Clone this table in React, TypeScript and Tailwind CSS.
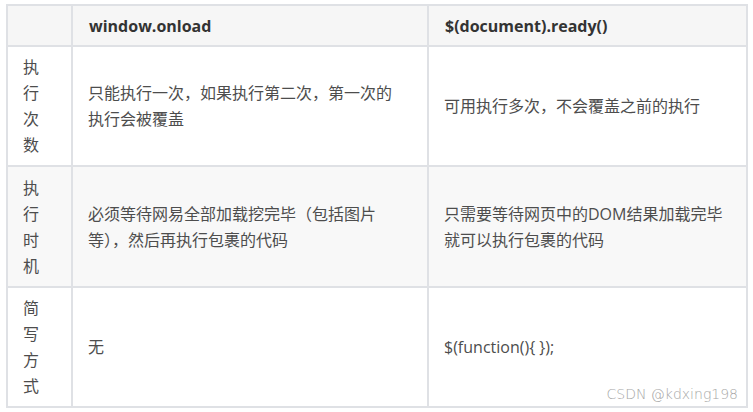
const font = '[font-family:"Open_Sans","Noto_Sans_CJK_SC",sans-serif]'

type Row = {
  label: string
  onload: string[]
  ready: string[]
  bg: string
  h: string
}

const rows: Row[] = [
  {
    label: '执行次数',
    onload: ['只能执行一次，如果执行第二次，第一次的', '执行会被覆盖'],
    ready: ['可用执行多次，不会覆盖之前的执行'],
    bg: 'bg-white',
    h: 'h-[120px]',
  },
  {
    label: '执行时机',
    onload: ['必须等待网易全部加载挖完毕（包括图片', '等），然后再执行包裹的代码'],
    ready: ['只需要等待网页中的DOM结果加载完毕', '就可以执行包裹的代码'],
    bg: 'bg-[#f8f8f8]',
    h: 'h-[121px]',
  },
  {
    label: '简写方式',
    onload: ['无'],
    ready: ['$(function(){ });'],
    bg: 'bg-white',
    h: 'h-[120px]',
  },
]

const Cell = ({ lines, bg, h }: { lines: string[]; bg: string; h: string }) => (
  <div className={`flex items-center border-r-2 border-b-2 border-[#dfe1e5] px-[15px] ${bg} ${h}`}>
    <p>
      {lines.map((l, i) => (
        <span key={i} className="block whitespace-nowrap">
          {l}
        </span>
      ))}
    </p>
  </div>
)

export default function App() {
  return (
    <div className={`min-h-[412px] w-[753px] bg-white pl-[6px] pt-[4px] text-[16px] leading-[26px] text-[#4d4d4d] ${font}`}>
      <div className="relative grid w-[742px] grid-cols-[65px_356px_319px] border-l-2 border-t-2 border-[#dfe1e5]">
        <div className="h-[41px] border-r-2 border-b-2 border-[#dfe1e5] bg-[#f6f6f6]" />
        <div className="flex h-[41px] items-center border-r-2 border-b-2 border-[#dfe1e5] bg-[#f6f6f6] px-4 font-bold text-[#333]">
          window.onload
        </div>
        <div className="flex h-[41px] items-center border-r-2 border-b-2 border-[#dfe1e5] bg-[#f6f6f6] px-4 font-bold text-[#333]">
          $(document).ready()
        </div>

        {rows.map((r) => (
          <div key={r.label} className="contents">
            <div className={`flex items-center border-r-2 border-b-2 border-[#dfe1e5] pl-[15px] ${r.bg} ${r.h}`}>
              <p className="flex flex-col">
                {r.label.split('').map((c) => (
                  <span key={c}>{c}</span>
                ))}
              </p>
            </div>
            <Cell lines={r.onload} bg={r.bg} h={r.h} />
            <Cell lines={r.ready} bg={r.bg} h={r.h} />
          </div>
        ))}

        <span className='absolute right-[10px] bottom-[5px] text-[14px] leading-[18px] text-[#a6a6a6] [font-family:"DejaVu_Sans",sans-serif] font-light'>
          CSDN @kdxing198
        </span>
      </div>
    </div>
  )
}
